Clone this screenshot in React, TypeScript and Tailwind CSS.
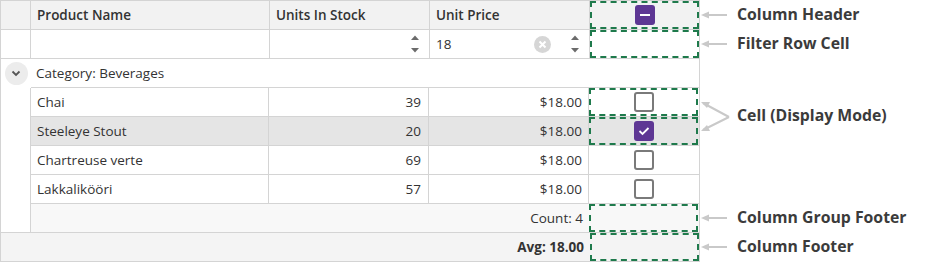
import React from 'react';

const products = [
  { name: 'Chai', stock: 39, price: '$18.00', checked: false },
  { name: 'Steeleye Stout', stock: 20, price: '$18.00', checked: true },
  { name: 'Chartreuse verte', stock: 69, price: '$18.00', checked: false },
  { name: 'Lakkalikööri', stock: 57, price: '$18.00', checked: false },
];

const Spin: React.FC = () => (
  <svg width="10" height="20" viewBox="0 0 10 20" className="shrink-0">
    <path d="M1 6 L5 1.5 L9 6 Z" fill="#6b6b6b" />
    <path d="M1 14 L5 18.5 L9 14 Z" fill="#6b6b6b" />
  </svg>
);

const Dashed: React.FC = () => (
  <div className="absolute inset-0 border-2 border-dashed border-[#1f7a4c] pointer-events-none" />
);

const CheckBox: React.FC<{ checked?: boolean; minus?: boolean }> = ({ checked, minus }) => {
  if (checked || minus) {
    return (
      <div className="w-5 h-5 rounded-[3px] bg-[#5e3794] flex items-center justify-center">
        {minus ? (
          <div className="w-[10px] h-[2px] bg-white" />
        ) : (
          <svg width="12" height="10" viewBox="0 0 12 10">
            <path d="M1.5 5 L4.5 8 L10.5 2" stroke="white" strokeWidth="1.8" fill="none" />
          </svg>
        )}
      </div>
    );
  }
  return <div className="w-5 h-5 rounded-[3px] border-2 border-[#7a7a7a] bg-white" />;
};

const Arrow: React.FC = () => (
  <svg width="28" height="10" viewBox="0 0 28 10" className="shrink-0">
    <path d="M1 5 L9 1.5 L9 8.5 Z" fill="#c9c9c9" />
    <line x1="8" y1="5" x2="27" y2="5" stroke="#c9c9c9" strokeWidth="2" />
  </svg>
);

const Label: React.FC<{ text: string; h: string }> = ({ text, h }) => (
  <div className={`${h} flex items-center`}>
    <Arrow />
    <span className="ml-[9px] text-[15.8px] font-bold text-[#3b3b3b]">{text}</span>
  </div>
);

export default function App() {
  return (
    <div className="flex w-[950px] h-[262px] bg-white font-['Open_Sans',sans-serif] text-[13.5px] text-[#333]">
      {/* Grid */}
      <div className="w-[700px] h-[262px] border border-[#d4d4d4] flex flex-col shrink-0">
        {/* Header */}
        <div className="flex h-[29px] shrink-0 bg-[#f2f2f2] border-b border-[#d4d4d4] font-semibold">
          <div className="w-[30px] border-r border-[#d4d4d4]" />
          <div className="w-[239px] border-r border-[#d4d4d4] flex items-center pl-[6px]">Product Name</div>
          <div className="w-[160px] border-r border-[#d4d4d4] flex items-center pl-[6px]">Units In Stock</div>
          <div className="w-[160px] border-r border-[#d4d4d4] flex items-center pl-[6px]">Unit Price</div>
          <div className="w-[109px] relative flex items-center justify-center">
            <CheckBox minus />
            <Dashed />
          </div>
        </div>

        {/* Filter row */}
        <div className="flex h-[29px] shrink-0 border-b border-[#d4d4d4]">
          <div className="w-[30px] border-r border-[#d4d4d4]" />
          <div className="w-[239px] border-r border-[#d4d4d4]" />
          <div className="w-[160px] border-r border-[#d4d4d4] flex items-center justify-end pr-[9px]">
            <Spin />
          </div>
          <div className="w-[160px] border-r border-[#d4d4d4] flex items-center pl-[6px] pr-[9px]">
            <span className="flex-1">18</span>
            <svg width="17" height="17" viewBox="0 0 17 17" className="mr-[19px]">
              <circle cx="8.5" cy="8.5" r="8.5" fill="#d6d6d6" />
              <path d="M5.5 5.5 L11.5 11.5 M11.5 5.5 L5.5 11.5" stroke="white" strokeWidth="2" />
            </svg>
            <Spin />
          </div>
          <div className="w-[109px] relative">
            <Dashed />
          </div>
        </div>

        {/* Group row */}
        <div className="flex h-[29px] shrink-0">
          <div className="w-[30px] flex items-center justify-center">
            <div className="w-[23px] h-[23px] rounded-full bg-[#ececec] flex items-center justify-center">
              <svg width="10" height="7" viewBox="0 0 10 7">
                <path d="M1.5 1.5 L5 5 L8.5 1.5" stroke="#555" strokeWidth="1.8" fill="none" />
              </svg>
            </div>
          </div>
          <div className="flex-1 border-b border-[#d4d4d4] flex items-center pl-[5px]">Category: Beverages</div>
        </div>

        {/* Data rows */}
        {products.map((p) => (
          <div key={p.name} className="flex h-[29px] shrink-0">
            <div className="w-[30px] border-r border-[#d4d4d4]" />
            <div className={`flex flex-1 border-b border-[#d4d4d4] ${p.checked ? 'bg-[#e5e5e5]' : ''}`}>
              <div className="w-[238px] border-r border-[#d4d4d4] flex items-center pl-[6px]">{p.name}</div>
              <div className="w-[160px] border-r border-[#d4d4d4] flex items-center justify-end pr-[7px]">{p.stock}</div>
              <div className="w-[160px] border-r border-[#d4d4d4] flex items-center justify-end pr-[6px]">{p.price}</div>
              <div className="w-[109px] relative flex items-center justify-center">
                <CheckBox checked={p.checked} />
                {p.name === 'Chai' || p.checked ? <Dashed /> : null}
              </div>
            </div>
          </div>
        ))}

        {/* Group footer */}
        <div className="flex h-[29px] shrink-0 border-b border-[#d4d4d4]">
          <div className="w-[30px] border-r border-[#d4d4d4]" />
          <div className="flex flex-1 bg-[#f8f8f8]">
            <div className="w-[558px] flex items-center justify-end pr-[6px]">Count: 4</div>
            <div className="w-[109px] relative">
              <Dashed />
            </div>
          </div>
        </div>

        {/* Footer */}
        <div className="flex flex-1 bg-[#f4f4f4]">
          <div className="w-[589px] flex items-center justify-end pr-[6px] font-bold">Avg: 18.00</div>
          <div className="w-[109px] relative">
            <Dashed />
          </div>
        </div>
      </div>

      {/* Annotations */}
      <div className="flex flex-col">
        <Label text="Column Header" h="h-[29px]" />
        <Label text="Filter Row Cell" h="h-[29px]" />
        <div className="h-[29px]" />
        <div className="h-[58px] flex items-center">
          <svg width="30" height="58" viewBox="0 0 30 58" className="shrink-0">
            <path d="M29 30 L3 16 M29 30 L3 43" stroke="#c9c9c9" strokeWidth="2" fill="none" />
            <path d="M1 15 L10 15 L7 21 Z" fill="#c9c9c9" />
            <path d="M1 44 L10 44 L7 38 Z" fill="#c9c9c9" />
          </svg>
          <span className="ml-[7px] text-[15.8px] font-bold text-[#3b3b3b]">Cell (Display Mode)</span>
        </div>
        <div className="h-[58px]" />
        <Label text="Column Group Footer" h="h-[29px]" />
        <Label text="Column Footer" h="h-[29px]" />
      </div>
    </div>
  );
}
